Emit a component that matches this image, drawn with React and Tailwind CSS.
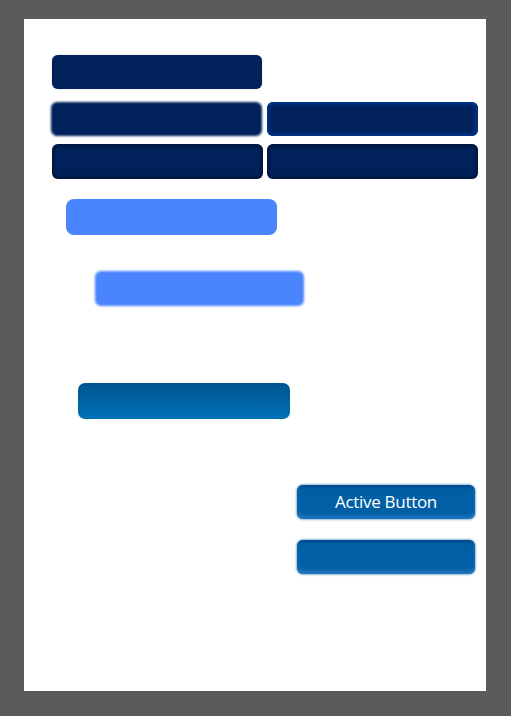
import React from "react";

const navy = "h-[34px] rounded-[6px] bg-[#00215a]";

export default function App() {
  return (
    <div className="min-h-screen w-full bg-[#5b5b5b] pt-[19px] pl-[24px]" style={{ fontFamily: '"Open Sans", sans-serif' }}>
      <div className="flex h-[672px] w-[462px] flex-col bg-white">
        <div className={`${navy} ml-[28px] mt-[36px] w-[210px] shadow-[0_0_1px_rgba(0,20,60,0.6)]`} />

        <div className="ml-[27px] mt-[13px] flex gap-[5px]">
          <div className={`${navy} w-[211px] blur-[1.2px]`} />
          <div className={`${navy} w-[211px] shadow-[inset_0_0_4px_2px_#003a96]`} />
        </div>

        <div className="ml-[28px] mt-[8px] flex gap-[4px]">
          <div className={`${navy} h-[35px] w-[211px] shadow-[inset_0_0_4px_1px_rgba(0,0,0,0.55)]`} />
          <div className={`${navy} h-[35px] w-[211px] shadow-[inset_0_0_4px_1px_rgba(0,0,0,0.55)]`} />
        </div>

        <div className="ml-[42px] mt-[20px] h-[36px] w-[211px] rounded-[8px] bg-[#4a85fe]" />

        <div className="ml-[71px] mt-[36px] h-[35px] w-[209px] rounded-[6px] bg-[#4a85fe] blur-[1.2px]" />

        <div className="ml-[54px] mt-[77px] h-[36px] w-[212px] rounded-[7px] bg-gradient-to-b from-[#00558f] to-[#0072b8]" />

        <button className="ml-[273px] mt-[66px] flex h-[34px] w-[178px] items-center justify-center rounded-[6px] bg-[#005fa5] text-[17px] font-medium tracking-[-0.3px] text-white shadow-[0_0_2px_1px_rgba(0,100,170,0.45),inset_0_-3px_4px_rgba(60,140,210,0.6),inset_0_2px_3px_rgba(0,50,110,0.5)]">
          Active Button
        </button>

        <div className="ml-[273px] mt-[21px] h-[34px] w-[178px] rounded-[6px] bg-[#005fa5] shadow-[0_0_2px_1px_rgba(0,100,170,0.45),inset_0_-3px_4px_rgba(60,140,210,0.6),inset_0_2px_3px_rgba(0,50,110,0.5)]" />
      </div>
    </div>
  );
}
